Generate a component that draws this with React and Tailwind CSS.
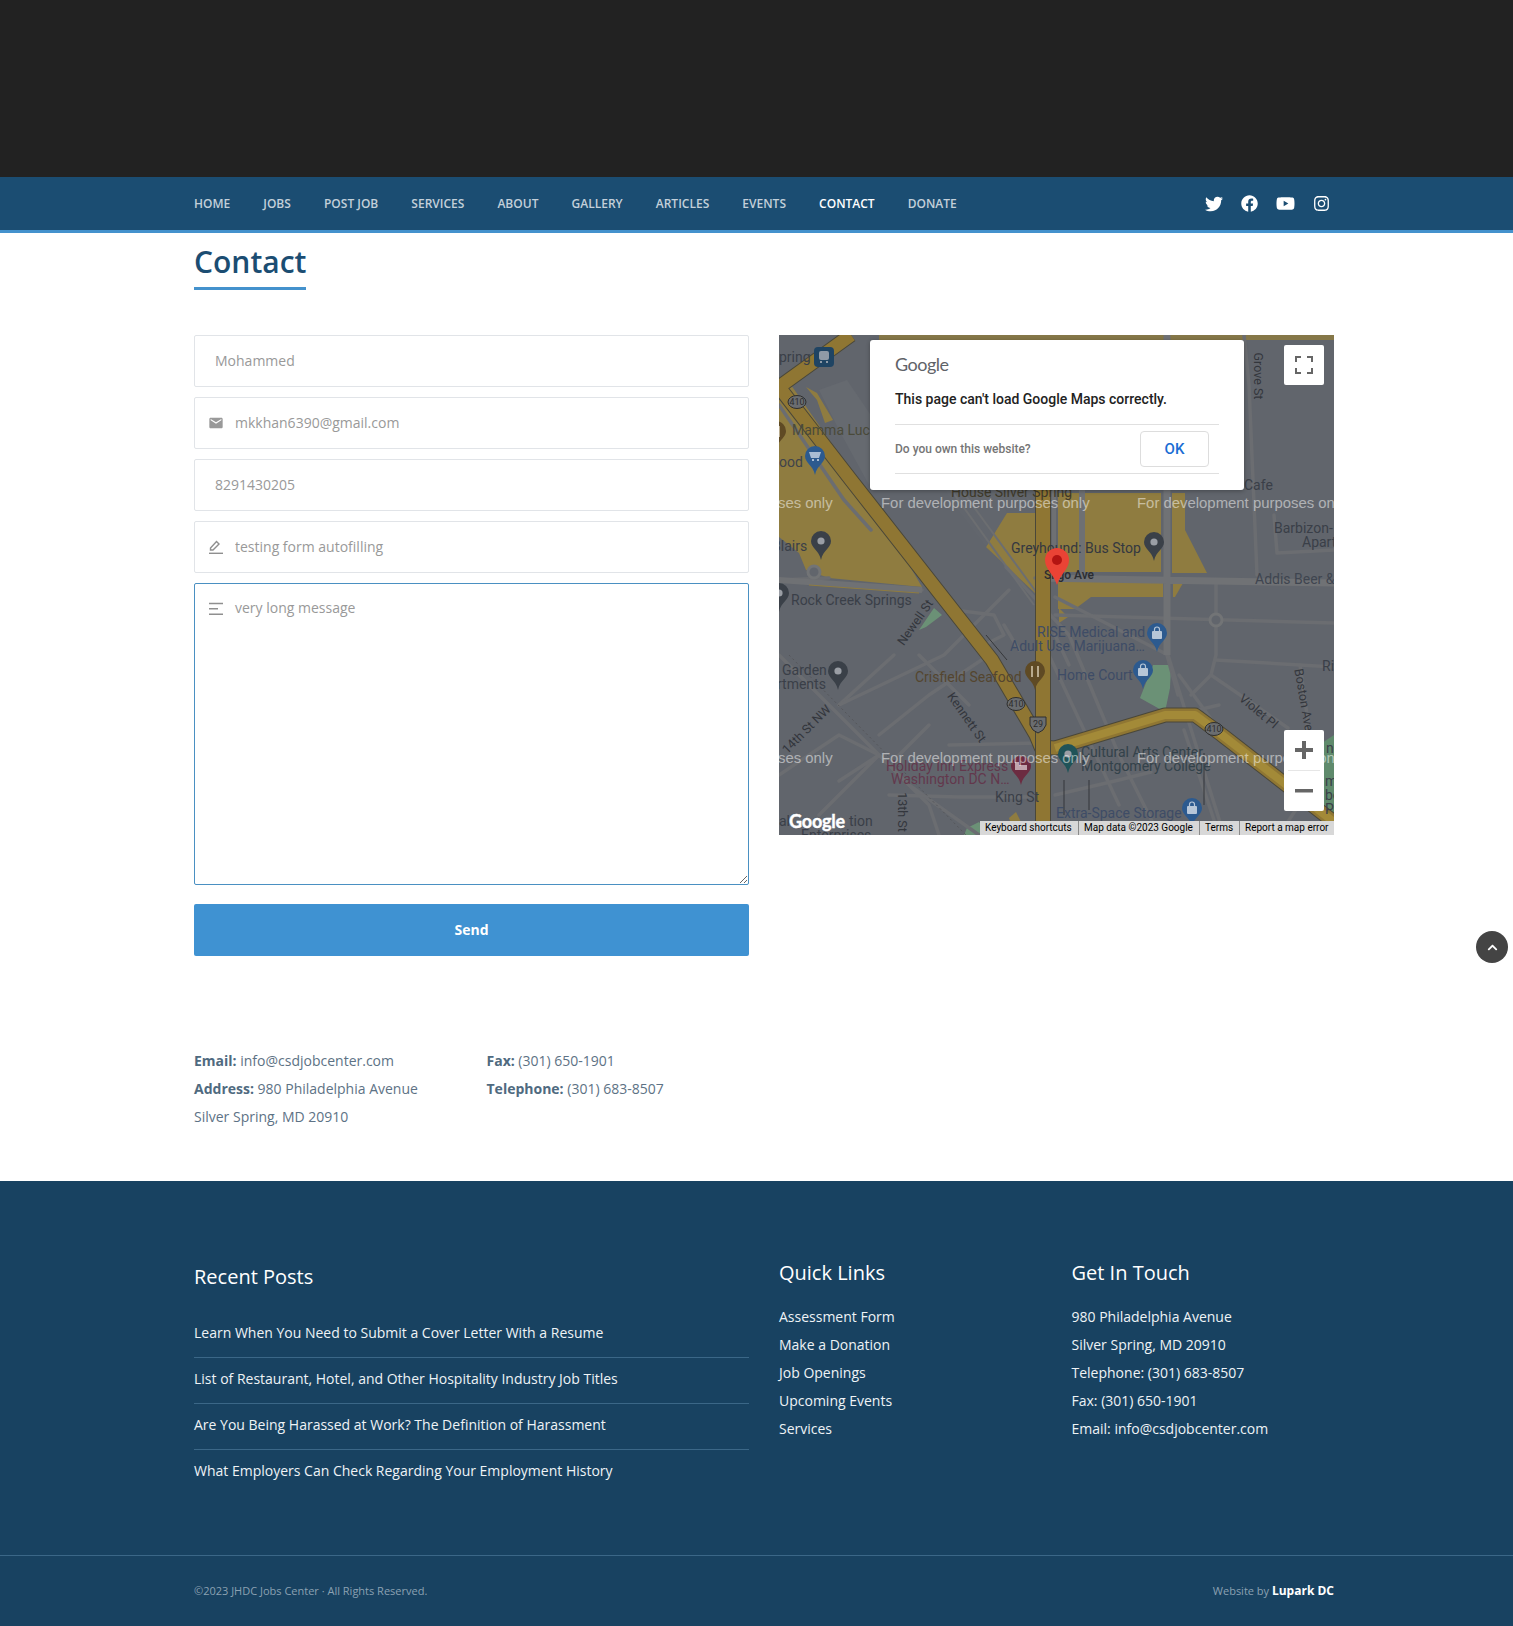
import React from "react";
import { FaTwitter, FaFacebook, FaYoutube, FaInstagram, FaChevronUp } from "react-icons/fa";
import { MdEmail } from "react-icons/md";

const navItems = ["HOME", "JOBS", "POST JOB", "SERVICES", "ABOUT", "GALLERY", "ARTICLES", "EVENTS", "CONTACT", "DONATE"];
const posts = [
  "Learn When You Need to Submit a Cover Letter With a Resume",
  "List of Restaurant, Hotel, and Other Hospitality Industry Job Titles",
  "Are You Being Harassed at Work? The Definition of Harassment",
  "What Employers Can Check Regarding Your Employment History",
];

const minorRoads = [
  "M0 245 L143 255", "M0 245 L50 243", "M256 243 L555 248", "M388 0 L388 320 L399 360", "M276 280 L555 288",
  "M437 248 L437 320 L432 340 L412 360", "M276 262 L389 320 L420 420 L445 500", "M432 340 L509 393", "M521 330 L529 387 L510 450",
  "M436 325 L555 332", "M227 232 L290 300 L340 420 L380 500", "M0 70 L65 165 L92 195", "M465 0 L470 50 L478 240",
  "M495 180 L498 218 L555 215", "M0 320 L130 450 L200 500", "M60 370 L115 320", "M60 370 L165 320 L230 255", "M0 440 L60 400 L100 420 L40 480",
  "M60 446 L100 420 L150 470 L160 500", "M110 460 L180 462 L250 462", "M100 400 L150 360 L210 320", "M150 390 L120 420", "M190 370 L140 320",
  "M170 410 L260 408", "M175 275 L215 280 L225 300 L205 310", "M225 290 L240 315", "M276 460 L340 445 L372 437", "M405 395 L420 440 L440 500",
  "M276 300 L290 330", "M400 340 L440 395", "M270 320 L340 470", "M540 440 L500 500", "M270 410 L440 370",
];

const labels = [
  ["pring", 0, 27, "#3a3f48"], ["Mamma Luc", 13, 100, "#4a4a3a"], ["ood", 0, 132, "#3f434a"], ["Blairs", -7, 216, "#3a3f48"],
  ["Greyhound: Bus Stop", 232, 218, "#343840"], ["House Silver Spring", 172, 162, "#3f3a2a"], ["Cafe", 465, 155, "#3a3f48"],
  ["Addis Beer &", 476, 249, "#3f4550"], ["Barbizon-", 495, 198, "#3a3f48"], ["Apart", 523, 212, "#3a3f48"],
  ["Rock Creek Springs", 12, 270, "#3a3f48"], ["RISE Medical and", 258, 302, "#3e4c66"], ["Adult Use Marijuana…", 231, 316, "#3e4c66"],
  ["Home Court", 278, 345, "#3e4c66"], ["Crisfield Seafood", 136, 347, "#54452f"], ["Garden", 3, 340, "#3a3f48"], ["rtments", -2, 354, "#3a3f48"],
  ["Holiday Inn Express &", 107, 436, "#63384c"], ["Washington DC N…", 112, 449, "#63384c"], ["King St", 216, 467, "#3a3f48"],
  ["Cultural Arts Center", 302, 422, "#33424a"], ["Montgomery College", 302, 436, "#33424a"], ["Extra-Space Storage", 277, 483, "#3e4c66"],
  ["Ric", 543, 336, "#3a3f48"], ["al", 0, 491, "#3a3f48"], ["tion", 70, 491, "#3a3f48"], ["Enterprises", 22, 505, "#3a3f48"],
  ["ng", 547, 418, "#3a3f48"], ["me", 546, 451, "#3a3f48"], ["bo", 546, 465, "#3a3f48"], ["Pa", 546, 479, "#3a3f48"],
];

const rotated = [
  ["Newell St", 137, 288, -55], ["14th St NW", 28, 395, -45], ["Kennett St", 187, 383, 55], ["13th St", 122, 477, 90],
  ["Boston Ave", 524, 365, 80], ["Violet Pl", 479, 377, 40], ["Grove St", 478, 41, 90],
];

const pins = [
  [36, 140, "#2c5a8f", "cart"], [42, 225, "#3a4048", "dot"], [375, 226, "#3a4048", "dot"], [378, 317, "#2c5a8f", "bag"], [364, 354, "#2c5a8f", "bag"],
  [256, 355, "#5f4a24", "fork"], [59, 355, "#3a4048", "dot"], [242, 450, "#6c2c41", "bed"], [289, 438, "#1f5358", "dot"], [413, 492, "#2c5a8f", "bag"],
  [0, 277, "#3a4048", "dot"], [-3, 115, "#5f4a24", "fork"],
];

function PinMark({ x, y, kind }) {
  const cy = y - 19;
  if (kind === "dot") return <circle cx={x} cy={cy} r="3.6" fill="#9a9ea5" />;
  if (kind === "fork") {
    return <path d={`M${x - 3} ${cy - 5} V${cy + 6} M${x + 3} ${cy - 5} V${cy + 6}`} stroke="#b9ab8e" strokeWidth="2" fill="none" />;
  }
  if (kind === "bed") {
    return <path d={`M${x - 6} ${cy - 4} V${cy + 4} H${x + 6} V${cy - 1} H${x - 2} V${cy - 4} Z`} fill="#c0a4ad" />;
  }
  if (kind === "cart") {
    return <path d={`M${x - 6} ${cy - 4} H${x + 6} L${x + 4} ${cy + 2} H${x - 4} Z M${x - 3} ${cy + 3} h2 v2 h-2 z M${x + 2} ${cy + 3} h2 v2 h-2 z`} fill="#a9bdd4" />;
  }
  return (
    <g>
      <rect x={x - 5} y={cy - 2} width="10" height="8" rx="1" fill="#b6c6d8" />
      <path d={`M${x - 2.5} ${cy - 2} v-1.5 a2.5 2.5 0 0 1 5 0 v1.5`} stroke="#b6c6d8" strokeWidth="1.2" fill="none" />
    </g>
  );
}

function Shield({ x, y, t }) {
  return (
    <g>
      <ellipse cx={x} cy={y} rx="9" ry="6.5" fill="#6a6d70" stroke="#2e2e2e" strokeWidth="1" />
      <text x={x} y={y + 3} textAnchor="middle" fontSize="9" fill="#2e2e2e" fontFamily="Roboto, sans-serif">{t}</text>
    </g>
  );
}

function MapDrawing() {
  return (
    <svg viewBox="0 0 555 500" className="block h-full w-full">
      <rect width="555" height="500" fill="#61656c" />
      <g fill="#8f7c40">
        <polygon points="0,48 12,50 92,165 143,252 50,243 27,235 20,218 0,202" />
        <polygon points="227,178 256,178 256,258 207,212" />
        <polygon points="279,158 382,158 382,237 279,237" />
        <polygon points="393,158 406,158 406,195 428,238 393,238" />
        <polygon points="279,247 384,247 384,262 312,262 296,274 279,274" />
        <polygon points="394,248 404,248 396,262 394,262" />
        <polygon points="280,273 289,282 280,288" />
        <polygon points="100,0 555,0 555,5 100,5" opacity="0.8" />
      </g>
      <polygon points="40,55 68,45 112,110 100,125 90,150 60,95" fill="#666a70" />
      <polygon points="27,52 38,58 54,85 46,88 38,65" fill="#8f7c40" />
      <polygon points="218,145 228,178 207,212 175,170 160,145" fill="#62666d" />
      <g fill="#6fa07a" opacity="0.75">
        <polygon points="361,363 374,330 392,330 391,353 386,377" />
        <polygon points="140,295 155,273 163,280 147,292" />
        <polygon points="188,493 200,487 210,500 185,500" />
      </g>
      <polygon points="230,483 237,477 242,487 233,493" fill="#8f7c40" />
      <polygon points="540,410 555,400 555,500 545,500" fill="#5f8a6c" />
      <g fill="none" stroke="#6b6d71" strokeWidth="3.5" strokeLinecap="round" strokeLinejoin="round">
        {minorRoads.map((d) => <path key={d} d={d} />)}
      </g>
      <path d="M256 243 L555 248 M388 0 L388 320" stroke="#707275" strokeWidth="7" fill="none" />
      <path d="M303 145 L303 243" stroke="#6e7073" strokeWidth="6" fill="none" />
      <path d="M275 145 L275 243" stroke="#6e7073" strokeWidth="4" fill="none" />
      <path d="M0 245 L143 255" stroke="#6f7174" strokeWidth="6" fill="none" />
      <path d="M30 250 L140 258" stroke="#8f7c40" strokeWidth="1" fill="none" />
      <circle cx="437" cy="285" r="6" fill="#61656c" stroke="#727476" strokeWidth="3" />
      <circle cx="35" cy="237" r="6" fill="#61656c" stroke="#727476" strokeWidth="3" />
      <path d="M165 145 L255 270 M175 145 L258 258" stroke="#6c6e71" strokeWidth="2" fill="none" />
      <path d="M10 320 L187 500" stroke="#55565a" strokeWidth="1" strokeDasharray="2 3" fill="none" />
      <path d="M207 300 L228 325 M425 418 L425 470 M310 445 L310 475 M285 445 L285 480" stroke="#35373a" strokeWidth="1" fill="none" />
      <g fill="none" strokeLinejoin="round">
        <path d="M72 0 L0 52 M0 52 L72 145 L213 325 L257 400 L262 412 L276 413 L386 380 L416 380 L443 400 L555 487" stroke="#4a4739" strokeWidth="15" />
        <path d="M72 0 L0 52 M0 52 L72 145 L213 325 L257 400 L262 412 L276 413 L386 380 L416 380 L443 400 L555 487" stroke="#8f7633" strokeWidth="13" />
        <path d="M276 413 L386 380 L416 380 L443 400 L555 487" stroke="#a38a38" strokeWidth="8" />
        <path d="M264 145 L264 500" stroke="#4a4739" strokeWidth="16" />
        <path d="M264 145 L264 500" stroke="#8f7633" strokeWidth="14" />
      </g>
      <g fontFamily="Roboto, sans-serif" fontSize="14">
        {labels.map(([t, x, y, c]) => <text key={t + x} x={x} y={y} fill={c}>{t}</text>)}
        <text x="265" y="244" fill="#2a2c30" fontSize="12" fontWeight="500">Sligo Ave</text>
        <g fontSize="12.5" fill="#33363c">
          {rotated.map(([t, x, y, r]) => (
            <text key={t} x={x} y={y} textAnchor="middle" dominantBaseline="middle" transform={`rotate(${r} ${x} ${y})`}>{t}</text>
          ))}
        </g>
      </g>
      <Shield x={18} y={67} t="410" />
      <Shield x={237} y={369} t="410" />
      <Shield x={435} y={394} t="410" />
      <path d="M251 382 h16 v8 q-2 6 -8 8 q-6 -2 -8 -8 z" fill="#6a6d70" stroke="#2e2e2e" />
      <text x="259" y="392" textAnchor="middle" fontSize="9" fill="#2e2e2e" fontFamily="Roboto, sans-serif">29</text>
      {pins.map(([x, y, c, kind]) => (
        <g key={x + "-" + y}>
          <path d={`M${x} ${y} C${x - 2} ${y - 10} ${x - 10} ${y - 12} ${x - 10} ${y - 19} a10 10 0 0 1 20 0 C${x + 10} ${y - 12} ${x + 2} ${y - 10} ${x} ${y}`} fill={c} />
          <PinMark x={x} y={y} kind={kind} />
        </g>
      ))}
      <rect x="35" y="12" width="20" height="20" rx="4" fill="#1f4463" />
      <rect x="40" y="16" width="10" height="9" rx="2" fill="#8f9aa6" />
      <path d="M41 28 h2 v-2 h-2 z M47 28 h2 v-2 h-2 z" fill="#8f9aa6" />
      <path d="M278 250 C274 238 266 234 266 225 a12 12 0 0 1 24 0 C290 234 282 238 278 250" fill="#ea4335" />
      <circle cx="278" cy="225" r="5" fill="#b31412" />
      <g fontFamily="Liberation Sans, Arial, sans-serif" fontSize="14.9" fill="#ffffff" fillOpacity="0.5">
        {[173, 428].map((y) => [-155, 102, 358].map((x) => (
          <text key={x + "" + y} x={x} y={y}>For development purposes only</text>
        )))}
      </g>
      <text x="10" y="493" fontFamily="Lato, sans-serif" fontSize="18" fontWeight="700" letterSpacing="-0.2" fill="#ffffff" stroke="#ffffff" strokeWidth="0.4">Google</text>
    </svg>
  );
}

function Field({ icon, value }) {
  return (
    <div className="flex h-[52px] items-center rounded-[2px] border border-[#e1e4e8] bg-white">
      {icon ? <span className="ml-[13px] mr-[11px] flex w-[16px] justify-center text-[#999999]">{icon}</span> : <span className="w-[20px]" />}
      <input readOnly value={value} className="min-w-0 flex-1 bg-transparent pb-[2px] text-[14px] text-[#999999] outline-none" />
    </div>
  );
}

const PenIcon = (
  <svg width="16" height="15" viewBox="0 0 16 15" fill="none" stroke="#8f8f8f" strokeWidth="1.4">
    <path d="M2.5 10 V8 L8.5 1.6 L11 4 L5 10 Z" />
    <path d="M1 13.3 H15" />
  </svg>
);

const LinesIcon = (
  <svg width="16" height="14" viewBox="0 0 16 14" fill="none" stroke="#8f8f8f" strokeWidth="1.4">
    <path d="M1 1.5 H15 M1 6.8 H10 M1 12.3 H15" />
  </svg>
);

export default function App() {
  return (
    <div className="relative bg-white font-['Open_Sans',sans-serif] text-[14px]">
      <div className="h-[177px] bg-[#222222]" />
      <nav className="flex h-[56px] items-center border-b-[3px] border-[#4492cd] bg-[#1b4d72] pl-[194px] pr-[183px]">
        <div className="flex flex-1 gap-[33.1px]">
          {navItems.map((n) => (
            <a key={n} className={`text-[12px] font-semibold ${n === "CONTACT" ? "text-white" : "text-[#c3d0da]"}`}>{n}</a>
          ))}
        </div>
        <div className="flex items-center gap-[18px] text-white">
          <FaTwitter size={18} />
          <FaFacebook size={17} />
          <FaYoutube size={19} />
          <FaInstagram size={17} />
        </div>
      </nav>

      <main className="ml-[194px] w-[1140px]">
        <h1 className="w-fit border-b-[3px] border-[#4492cd] pb-[3px] pt-[6px] text-[30px] font-semibold leading-[45px] text-[#1b4d72]">Contact</h1>

        <div className="mt-[45px] grid grid-cols-[555px_555px] gap-x-[30px]">
          <form className="flex flex-col gap-[10px]">
            <Field value="Mohammed" />
            <Field icon={<MdEmail size={18} />} value="mkkhan6390@gmail.com" />
            <Field value="8291430205" />
            <Field icon={PenIcon} value="testing form autofilling" />
            <div className="relative">
              <span className="absolute left-[14px] top-[19px]">{LinesIcon}</span>
              <textarea readOnly value="very long message" className="block h-[302px] w-full rounded-[2px] border border-[#4a90c2] pl-[40px] pt-[12px] text-[14px] leading-[24px] text-[#999999] outline-none" />
            </div>
            <button type="button" className="mt-[9px] h-[52px] rounded-[2px] bg-[#3f92d2] pb-[2px] text-[14px] font-bold text-white">Send</button>
          </form>

          <div className="relative h-[500px] overflow-hidden font-['Roboto',sans-serif]">
            <MapDrawing />

            <div className="absolute left-[91px] top-[5px] h-[150px] w-[374px] rounded-[3px] bg-white px-[25px] shadow-[0_1px_4px_rgba(0,0,0,0.3)]">
              <div className="pt-[10px] font-['Lato',sans-serif] text-[18px] leading-[28px] tracking-[-0.5px] text-[#5f6368]">Google</div>
              <div className="mt-[11px] h-[35px] text-[14px] font-medium leading-[20px] text-[#222222]">This page can't load Google Maps correctly.</div>
              <div className="flex h-[50px] items-center justify-between border-y border-[#e0e0e0] pr-[10px]">
                <span className="text-[12px] font-medium text-[#757575]">Do you own this website?</span>
                <span className="flex h-[36px] w-[69px] items-center justify-center rounded-[4px] border border-[#dddddd] text-[15px] font-medium text-[#1a6dd4]">OK</span>
              </div>
            </div>

            <div className="absolute left-[505px] top-[10px] flex h-[40px] w-[40px] items-center justify-center rounded-[2px] bg-white">
              <svg width="18" height="18" viewBox="0 0 18 18" fill="none" stroke="#666666" strokeWidth="2">
                <path d="M1 6 V1 H6 M12 1 H17 V6 M17 12 V17 H12 M6 17 H1 V12" />
              </svg>
            </div>

            <div className="absolute left-[505px] top-[395px] h-[81px] w-[40px] rounded-[2px] bg-white">
              <div className="flex h-[40px] items-center justify-center">
                <svg width="18" height="18" viewBox="0 0 18 18" fill="#666666"><path d="M7 0 H11 V7 H18 V11 H11 V18 H7 V11 H0 V7 H7 Z" /></svg>
              </div>
              <div className="mx-[4px] h-px bg-[#e6e6e6]" />
              <div className="flex h-[40px] items-center justify-center">
                <svg width="18" height="18" viewBox="0 0 18 18" fill="#666666"><path d="M0 7 H18 V10.5 H0 Z" /></svg>
              </div>
            </div>

            <div className="absolute bottom-0 right-0 flex h-[14px] items-center bg-[#d8d8d8] text-[10px] leading-[14px] text-black">
              <span className="w-[98px] pl-[5px]">Keyboard shortcuts</span>
              <span className="w-[121px] border-l border-[#8a8a8a] pl-[5px]">Map data ©2023 Google</span>
              <span className="w-[40px] border-l border-[#8a8a8a] pl-[5px]">Terms</span>
              <span className="w-[95px] border-l border-[#8a8a8a] pl-[5px]">Report a map error</span>
            </div>
          </div>
        </div>

        <div className="mb-[50px] mt-[91px] grid w-[555px] grid-cols-[292.5px_262.5px] leading-[28px] text-[#5d7285]">
          <div>
            <div><b className="font-bold text-[#4f6a80]">Email:</b> info@csdjobcenter.com</div>
            <div><b className="font-bold text-[#4f6a80]">Address:</b> 980 Philadelphia Avenue</div>
            <div>Silver Spring, MD 20910</div>
          </div>
          <div>
            <div><b className="font-bold text-[#4f6a80]">Fax:</b> (301) 650-1901</div>
            <div><b className="font-bold text-[#4f6a80]">Telephone:</b> (301) 683-8507</div>
          </div>
        </div>
      </main>

      <footer className="bg-[#184261] text-[#eef3f6]">
        <div className="h-[375px] border-b border-[#3b6787] pl-[194px] pt-[78px]">
          <div className="grid w-[1140px] grid-cols-[555px_262.5px_262.5px] gap-x-[30px]">
            <div className="pt-[4px]">
              <h3 className="text-[20px] leading-[28px] text-white">Recent Posts</h3>
              <ul className="mt-[21px]">
                {posts.map((p, i) => (
                  <li key={p} className={`pb-[12px] pt-[9px] leading-[24px] ${i < 3 ? "border-b border-[#3b6787]" : ""}`}>{p}</li>
                ))}
              </ul>
            </div>
            <div>
              <h3 className="text-[20px] leading-[28px] text-white">Quick Links</h3>
              <ul className="mt-[16px] leading-[28px]">
                {["Assessment Form", "Make a Donation", "Job Openings", "Upcoming Events", "Services"].map((l) => <li key={l}>{l}</li>)}
              </ul>
            </div>
            <div>
              <h3 className="text-[20px] leading-[28px] text-white">Get In Touch</h3>
              <ul className="mt-[16px] leading-[28px]">
                {["980 Philadelphia Avenue", "Silver Spring, MD 20910", "Telephone: (301) 683-8507", "Fax: (301) 650-1901", "Email: info@csdjobcenter.com"].map((l) => <li key={l}>{l}</li>)}
              </ul>
            </div>
          </div>
        </div>
        <div className="flex h-[70px] items-center justify-between pl-[194px] pr-[179px] text-[11px] text-[#8ba1b2]">
          <span>©2023 JHDC Jobs Center · All Rights Reserved.</span>
          <span>Website by <b className="text-[12px] font-bold text-white">Lupark DC</b></span>
        </div>
      </footer>

      <div className="absolute left-[1476px] top-[931px] flex h-[32px] w-[32px] items-center justify-center rounded-full bg-[#444444] text-white">
        <FaChevronUp size={11} />
      </div>
    </div>
  );
}
